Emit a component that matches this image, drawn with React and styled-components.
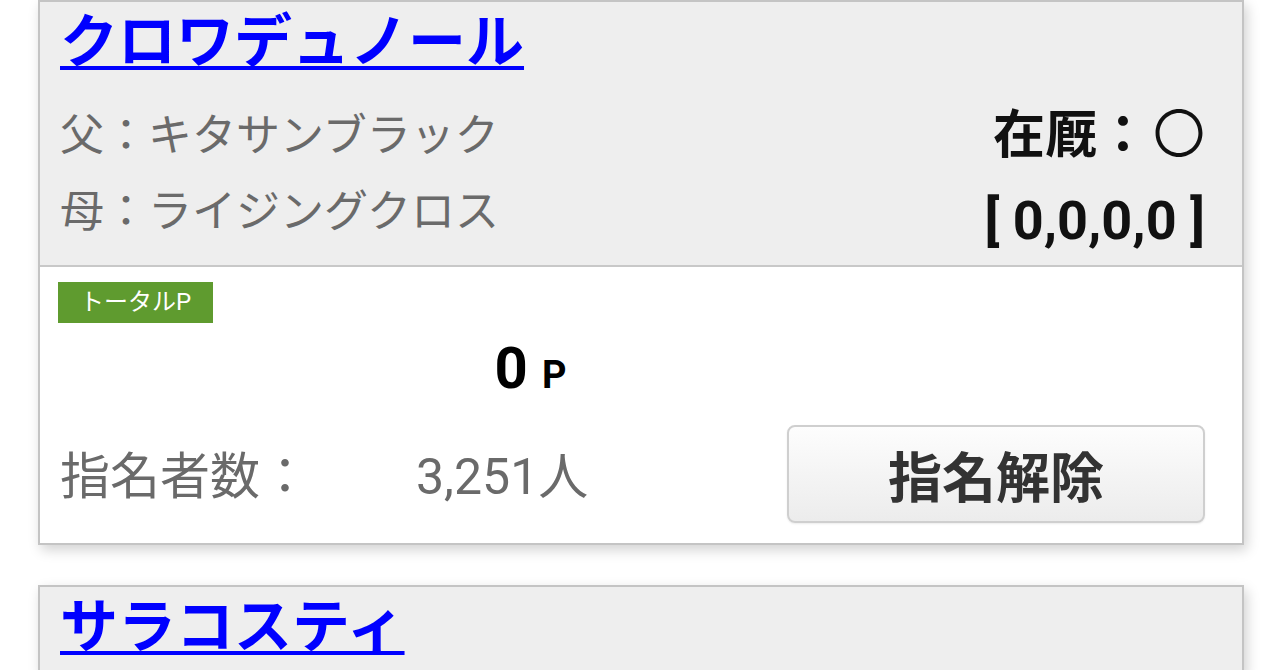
import React from "react";
import styled, { createGlobalStyle } from "styled-components";

const Global = createGlobalStyle`
  html, body { margin: 0; padding: 0; background: #ffffff; }
  body {
    font-family: Roboto, "Noto Sans CJK JP", "Noto Sans", sans-serif;
    overflow: hidden;
  }
`;

const Page = styled.div`
  padding: 0 36px 0 38px;
  display: flex;
  flex-direction: column;
  gap: 40px;
`;

const Card = styled.section`
  width: 1206px;
  box-sizing: border-box;
  border: 2px solid #c4c4c4;
  background: #ffffff;
  box-shadow: 3px 5px 12px rgba(0, 0, 0, 0.18);
`;

const Header = styled.div`
  background: #eeeeee;
  padding: 0 37px 6px 20px;
  border-bottom: ${(p) => (p.$open ? "2px solid #c8c8c8" : "none")};
`;

const Title = styled.a`
  display: inline-block;
  font-size: 58px;
  line-height: 80px;
  font-weight: 700;
  color: #0000ff;
  text-decoration: underline;
  text-decoration-thickness: 4px;
  text-underline-offset: 4px;
`;

const InfoRow = styled.div`
  display: flex;
  justify-content: space-between;
  padding-top: 16px;
`;

const Parents = styled.div`
  display: flex;
  flex-direction: column;
`;

const ParentLine = styled.div`
  font-size: 44px;
  line-height: 76px;
  color: #6a6a6a;
`;

const Status = styled.div`
  display: flex;
  flex-direction: column;
  align-items: flex-end;
`;

const StatusLine = styled.div`
  font-size: ${(p) => p.$size || 52}px;
  line-height: 76px;
  font-weight: 700;
  color: #111111;
  margin-top: ${(p) => p.$gap || 0}px;
`;

const Mark = styled.span`
  font-weight: 400;
  color: #111111;
  margin-left: 4px;
`;

const Body = styled.div`
  padding: 15px 37px 20px 18px;
  display: flex;
  flex-direction: column;
`;

const Tag = styled.span`
  align-self: flex-start;
  background: #5f9b2f;
  color: #ffffff;
  font-size: 24px;
  line-height: 41px;
  height: 41px;
  padding: 0 22px;
`;

const Points = styled.div`
  margin-top: 10px;
  padding-right: 202px;
  text-align: center;
  font-weight: 700;
  color: #000000;
  line-height: 70px;
`;

const PointValue = styled.span`
  font-size: 58px;
`;

const PointUnit = styled.span`
  font-size: 38px;
  margin-left: 14px;
`;

const Bottom = styled.div`
  margin-top: 7px;
  display: flex;
  align-items: center;
  padding-left: 2px;
`;

const CountLabel = styled.span`
  width: 356px;
  font-size: 50px;
  color: #6a6a6a;
  margin-top: -4px;
`;

const CountValue = styled.span`
  flex: 1;
  font-size: 50px;
  color: #6a6a6a;
  margin-top: -4px;
`;

const Button = styled.button`
  width: 418px;
  height: 98px;
  box-sizing: border-box;
  border: 2px solid #cfcfcf;
  border-radius: 8px;
  background: linear-gradient(#fdfdfd, #ececec);
  box-shadow: 0 1px 2px rgba(0, 0, 0, 0.08);
  font-family: Roboto, "Noto Sans CJK JP", sans-serif;
  font-size: 54px;
  font-weight: 700;
  color: #333333;
  padding: 0;
`;

const horses = [
  {
    name: "クロワデュノール",
    sire: "キタサンブラック",
    dam: "ライジングクロス",
    stable: "〇",
    record: "[ 0,0,0,0 ]",
    points: "0",
    count: "3,251人",
    open: true,
  },
  {
    name: "サラコスティ",
    open: false,
  },
];

export default function App() {
  return (
    <>
      <Global />
      <Page>
        {horses.map((h) => (
          <Card key={h.name}>
            <Header $open={h.open}>
              <Title href="#">{h.name}</Title>
              {h.open && (
                <InfoRow>
                  <Parents>
                    <ParentLine>父：{h.sire}</ParentLine>
                    <ParentLine>母：{h.dam}</ParentLine>
                  </Parents>
                  <Status>
                    <StatusLine>
                      在厩：<Mark>{h.stable}</Mark>
                    </StatusLine>
                    <StatusLine $gap={9} $size={54}>
                      {h.record}
                    </StatusLine>
                  </Status>
                </InfoRow>
              )}
            </Header>
            {h.open && (
              <Body>
                <Tag>トータルP</Tag>
                <Points>
                  <PointValue>{h.points}</PointValue>
                  <PointUnit>P</PointUnit>
                </Points>
                <Bottom>
                  <CountLabel>指名者数：</CountLabel>
                  <CountValue>{h.count}</CountValue>
                  <Button>指名解除</Button>
                </Bottom>
              </Body>
            )}
          </Card>
        ))}
      </Page>
    </>
  );
}
